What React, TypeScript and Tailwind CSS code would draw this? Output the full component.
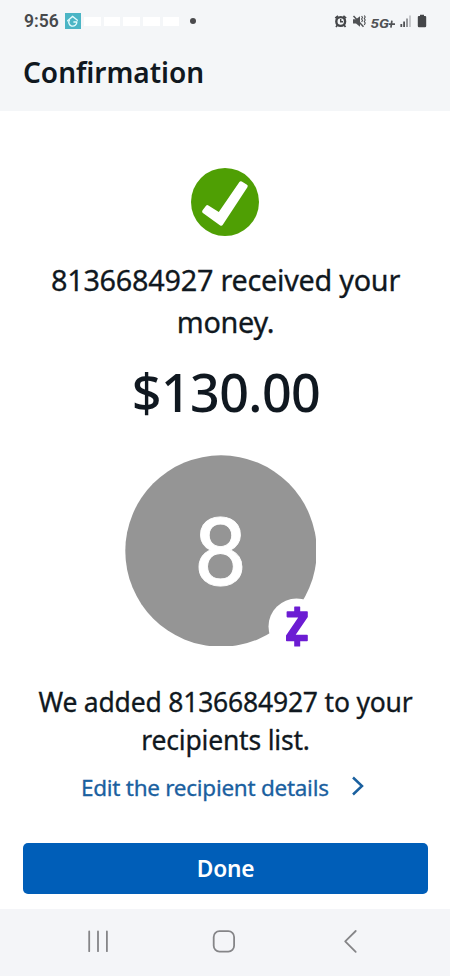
const cellBlocks = ['a', 'b', 'c', 'd', 'e'];

function StatusBar() {
  return (
    <div className="flex h-[42px] items-center pl-6 pr-[21px] text-[#47494c]">
      <span className="w-[35px] whitespace-nowrap pt-px font-['Roboto',sans-serif] text-[17.5px] font-semibold leading-none">9:56</span>
      <svg className="ml-1.5 shrink-0" width="16" height="16" viewBox="0 0 16 16" fill="none">
        <rect width="16" height="16" fill="#4bb5c5" />
        <path d="M2.6 7.8 L7.6 3.4 L12.4 7.2" stroke="#e4fbfd" strokeWidth="1.3" strokeLinecap="round" />
        <path d="M4.6 6.8 A4 4 0 1 0 11.8 9 H8.4" stroke="#e4fbfd" strokeWidth="1.3" />
      </svg>
      <div className="ml-[3px] flex gap-[3px]">
        {cellBlocks.map((key) => (
          <span key={key} className="h-[9px] w-[16.7px] bg-white" />
        ))}
      </div>
      <span className="ml-[10.5px] size-1.5 rounded-full bg-[#4a4a4c]" />
      <svg className="ml-auto shrink-0" width="96" height="20" viewBox="333 11 96 20" fill="none">
        <circle cx="340.7" cy="21.5" r="4.4" stroke="#444649" strokeWidth="2.4" />
        <path d="M335.3 18.2 L338 15.8 M343.4 15.8 L346.1 18.2 M337.5 25 L336 27 M344 25 L345.5 27" stroke="#444649" strokeWidth="1.7" />
        <path d="M340.7 19 V21.8 H343" stroke="#444649" strokeWidth="1.4" />
        <path d="M353 19.3 H356 L360 16.2 V26.8 L356 23.6 H353 Z" fill="#505255" />
        <path d="M353.5 16 L363.5 26.7" stroke="#505255" strokeWidth="1.5" />
        <path d="M361.6 16 L362.5 17.5 L361.6 19 L362.5 20.5 L361.6 22 M364.3 15.5 L365.2 17 L364.3 18.5 L365.2 20 L364.3 21.5 L365.2 23 L364.3 25" stroke="#505255" strokeWidth="1.1" />
        <text x="370.5" y="27.5" fill="#505255" fontFamily="Roboto, sans-serif" fontSize="13" fontWeight="700" fontStyle="italic" textLength="18.5" lengthAdjust="spacingAndGlyphs">5G</text>
        <path d="M391.9 20.6 L390.9 27.6 M388.8 24.2 H395" stroke="#505255" strokeWidth="1.7" />
        <path d="M401.3 24 V27 M404.1 21.5 V27" stroke="#505255" strokeWidth="1.8" />
        <path d="M407 18.5 V27" stroke="#8b8d90" strokeWidth="1.8" />
        <path d="M410 15.5 V27" stroke="#c2c4c7" strokeWidth="1.8" />
        <path d="M420 14.8 h4 v1.2 h1.2 a1 1 0 0 1 1 1 v9 a1.2 1.2 0 0 1 -1.2 1.2 h-6 a1.2 1.2 0 0 1 -1.2 -1.2 v-9 a1 1 0 0 1 1 -1 h1.2 z" fill="#444649" />
      </svg>
    </div>
  );
}

function SuccessIcon() {
  return (
    <svg className="mx-auto block" width="68" height="68" viewBox="0 0 68 68">
      <circle cx="34" cy="34" r="34" fill="#4f9f04" />
      <path d="M11.4 42.4 L15 37.8 Q16 36.6 17.4 37.4 L27.8 44 L48.4 14 Q49.4 12.6 50.8 13.6 L56 16.8 Q57.4 17.7 56.4 19.2 L31.8 56.8 Q30.7 58.4 29.2 57.4 L11.9 44.9 Q10.5 43.9 11.4 42.4 Z" fill="#fff" />
    </svg>
  );
}

function RecipientAvatar() {
  return (
    <div className="relative ml-[125px] mt-[25px] flex h-[191px] w-[191px] shrink-0 items-center justify-center">
      <svg className="absolute inset-0" width="190.5" height="190.5" viewBox="0 0 190.5 190.5">
        <circle cx="96" cy="96" r="95.7" fill="#959595" />
        <circle cx="171.5" cy="171.5" r="28" fill="#fff" />
      </svg>
      <span className="relative pt-[3px] font-['Roboto',sans-serif] text-[95px] leading-none text-white [-webkit-text-stroke:0.8px]">8</span>
      <svg className="absolute left-[160px] top-[150px]" width="24" height="44" viewBox="285 605 24 44" fill="#6c1cd3">
        <path d="M294.2 607 Q294.2 606.4 294.8 606.4 H299.6 Q300.2 606.4 300.2 607 V611.3 H307 Q307.8 611.3 307.8 612 V617 L295.7 634.8 H307 Q307.8 634.8 307.8 635.6 V640.4 Q307.8 641.2 307 641.2 H300.2 V646 Q300.2 646.6 299.6 646.6 H294.8 Q294.2 646.6 294.2 646 V641.2 H286.8 Q286 641.2 286 640.4 V635.4 L298.2 617.4 H287.4 Q286.6 617.4 286.6 616.6 V612 Q286.6 611.3 287.4 611.3 H294.2 Z" />
      </svg>
    </div>
  );
}

function NavigationBar() {
  return (
    <nav className="h-[67px] bg-[#f4f5f8]">
      <svg width="450" height="67" viewBox="0 909 450 67" fill="none" stroke="#858588" strokeWidth="1.8" strokeLinecap="round" strokeLinejoin="round">
        <path d="M89.2 931.5 V951.2 M98 931.5 V951.2 M106.9 931.5 V951.2" />
        <rect x="213.7" y="931.2" width="20.4" height="20.4" rx="5.8" />
        <path d="M355.7 931 L345.2 941.3 L355.7 951.8" />
      </svg>
    </nav>
  );
}

export default function App() {
  return (
    <div className="flex h-[976px] w-[450px] flex-col overflow-hidden bg-white font-['Noto_Sans',sans-serif] text-[#101820]">
      <header className="h-[111px] bg-[#f4f6f8]">
        <StatusBar />
        <h1 className="pl-[23px] text-[28px] font-semibold leading-[60px]">Confirmation</h1>
      </header>

      <main className="flex grow flex-col pt-[57px] text-center">
        <SuccessIcon />
        <p className="mt-[23px] whitespace-nowrap pl-px text-[28.8px] leading-[42px] tracking-[-0.25px] [-webkit-text-stroke:0.3px]">
          8136684927 received your
          <br />
          money.
        </p>
        <p className="mt-[10px] pl-0.5 text-[52px] font-medium leading-[77px] tracking-[-0.6px]">$130.00</p>
        <RecipientAvatar />
        <p className="mt-[37px] whitespace-nowrap pl-px text-[26.5px] leading-[38px] tracking-[-0.2px] [-webkit-text-stroke:0.3px]">
          We added 8136684927 to your
          <br />
          recipients list.
        </p>
        <a href="#" className="mt-[11px] flex h-[36px] items-center pl-[81px] text-[22.5px] leading-[36px] tracking-[-0.27px] text-[#1a609f] [-webkit-text-stroke:0.3px]">
          <span className="whitespace-nowrap">Edit the recipient details</span>
          <svg className="mb-[5px] ml-[22px] shrink-0" width="14" height="20" viewBox="0 0 14 20" fill="none" stroke="currentColor" strokeWidth="2.5">
            <path d="M2 1.5 L11 10 L2 18.5" />
          </svg>
        </a>
        <button className="mx-[22.5px] mb-[15px] mt-auto h-[51px] rounded-[5px] bg-[#005eb8] pt-px pl-px text-[22.7px] font-semibold tracking-[-0.2px] text-white">
          Done
        </button>
      </main>

      <NavigationBar />
    </div>
  );
}
